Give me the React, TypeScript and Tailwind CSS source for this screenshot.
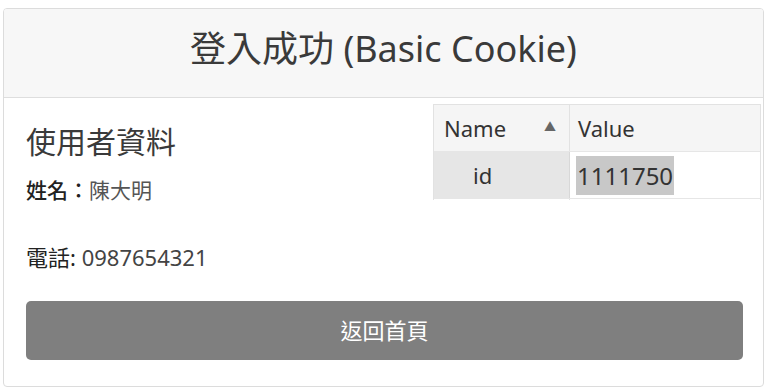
import React from "react";

const font = { fontFamily: '"Noto Sans", "Noto Sans CJK TC", sans-serif' };

export default function App() {
  return (
    <div className="w-[768px] h-[392px] bg-white pt-[8px] px-[3px]" style={font}>
      <div className="w-[761px] h-[379px] border border-[#dcdcdc] rounded-[4px] flex flex-col overflow-hidden">
        <div className="h-[89px] bg-[#f7f7f7] border-b border-[#dedede] flex items-center justify-center pb-[8px]">
          <h1 className="text-[36px] leading-[40px] text-[#3a3a3a] font-normal">登入成功 (Basic Cookie)</h1>
        </div>
        <div className="flex-1 flex flex-col pl-[22px] pr-[20px] pt-[6px]">
          <div className="flex justify-between">
            <div className="pt-[20px]">
              <h3 className="text-[30px] leading-[36px] text-[#3a3a3a] font-normal">使用者資料</h3>
              <p className="mt-[17px] text-[21px] leading-[26px] text-[#333]">
                <span className="font-medium text-[#222]">姓名：</span>
                <span className="text-[#555]">陳大明</span>
              </p>
            </div>
            <div className="w-[328px] h-[96px] mr-[-18px] overflow-hidden border-l border-r border-t border-[#e2e2e2] text-[22px] text-[#333]">
              <div className="flex h-[47px] bg-[#f5f5f5] border-b border-[#e6e6e6]">
                <div className="w-[136px] flex items-center justify-between pl-[10px] pr-[13px] border-r border-[#e2e2e2]">
                  <span>Name</span>
                  <span className="text-[12px] text-[#666]">▲</span>
                </div>
                <div className="flex-1 flex items-center pl-[8px]">Value</div>
              </div>
              <div className="flex h-[46px]">
                <div className="w-[136px] bg-[#e6e6e6] flex items-center pl-[39px] border-r border-[#d8d8d8]">id</div>
                <div className="flex-1 bg-white flex items-center pl-[6px]">
                  <span className="bg-[#c8c8c8] px-[1px] leading-[39px] text-[24px]">1111750</span>
                </div>
              </div>
              <div className="flex h-[10px] border-t border-[#e6e6e6]">
                <div className="w-[136px] border-r border-[#e2e2e2]" />
                <div className="flex-1" />
              </div>
            </div>
          </div>
          <p className="mt-[40px] text-[22px] leading-[28px] text-[#444]">
            <span className="text-[#222]">電話:</span> 0987654321
          </p>
          <button className="mt-[30px] w-[717px] h-[59px] rounded-[5px] bg-[#7f7f7f] text-white text-[22px] flex items-center justify-center">
            返回首頁
          </button>
        </div>
      </div>
    </div>
  );
}
